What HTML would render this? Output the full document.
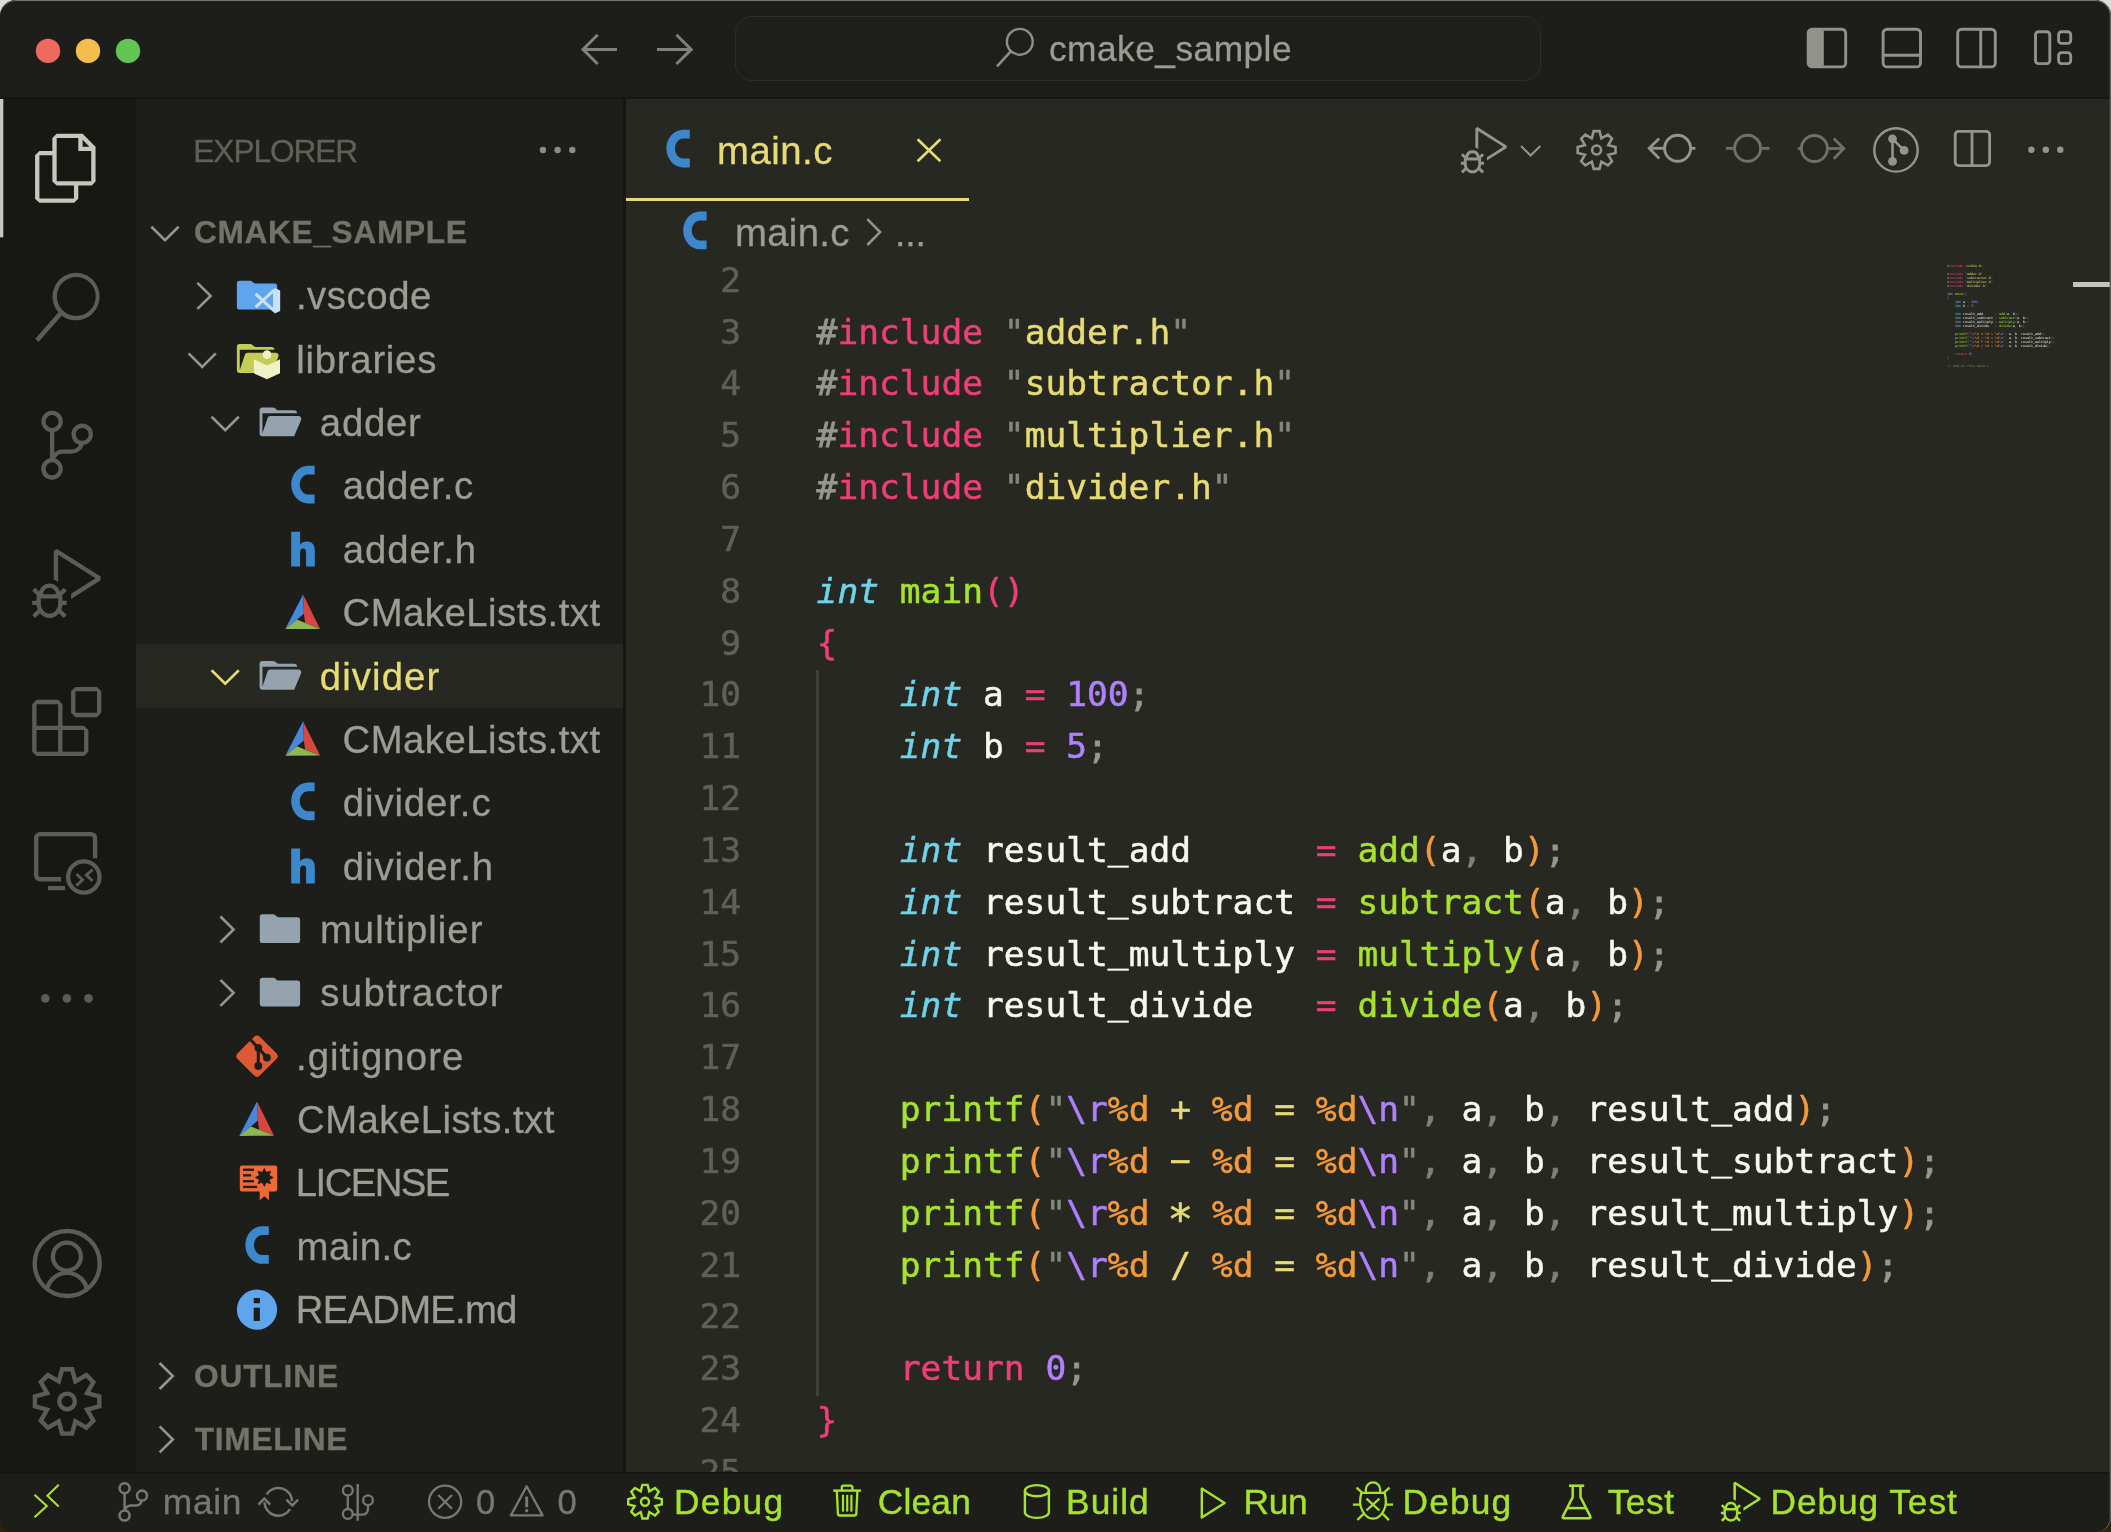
<!DOCTYPE html>
<html lang="en"><head><meta charset="utf-8"><title>main.c — cmake_sample</title>
<style>
*{box-sizing:border-box;margin:0;padding:0}
html,body{width:2111px;height:1532px;overflow:hidden}
body{background:linear-gradient(#dcdcda 0,#dcdcda 60px,#2a2410 60px,#2a2410 100%);font-family:"Liberation Sans",sans-serif;position:relative}
.win{position:absolute;left:0;top:0;width:2111px;height:1532px;border-radius:16px 16px 14px 14px;overflow:hidden;background:#1d1e1a}
.abs{position:absolute}
.tb{position:absolute;left:0;top:0;width:2111px;height:98px;background:#1d1e1a}
.tbline{position:absolute;left:0;top:97px;width:2111px;height:2px;background:#151612}
.act{position:absolute;left:0;top:99px;width:136px;height:1373px;background:#171813}
.side{position:absolute;left:136px;top:99px;width:487px;height:1373px;background:#1d1e1a}
.sash{position:absolute;left:623px;top:99px;width:3px;height:1373px;background:#161713}
.ed{position:absolute;left:626px;top:99px;width:1485px;height:1373px;background:#272822;overflow:hidden}
.sbline{position:absolute;left:0;top:1472px;width:2111px;height:2px;background:#151612}
.sb{position:absolute;left:0;top:1474px;width:2111px;height:58px;background:#1d1e1a}
.edge{position:absolute;left:0;top:0;width:2111px;height:1532px;border-radius:16px 16px 14px 14px;box-shadow:inset 0 1px 0 #747570, inset -1.3px 0 0 #5d5e59;pointer-events:none}
.t{position:absolute;white-space:pre;line-height:1}
/* code */
.ln{position:absolute;left:667px;width:74px;text-align:right;font:34.56px/51.84px "DejaVu Sans Mono","Liberation Mono",monospace;color:#5f6059;white-space:pre;-webkit-text-stroke:0.5px}
.cl{position:absolute;left:816.6px;font:34.56px/51.84px "DejaVu Sans Mono","Liberation Mono",monospace;color:#f8f8f2;white-space:pre;-webkit-text-stroke:0.5px}
.cl .p,.ml .p{color:#96978f}
.cl .q,.ml .q{color:#85867e}
.cl .c,.ml .c{color:#777870}
.cl .k,.ml .k{color:#ee3f77}
.cl .s,.ml .s{color:#e6db74}
.cl .t,.ml .t{color:#6fd3ea;font-style:italic}
.cl .f,.ml .f{color:#a6e22e}
.cl .v,.ml .v{color:#f8f8f2}
.cl .n,.ml .n{color:#ae81ff}
.cl .e,.ml .e{color:#ae81ff}
.cl .o,.ml .o{color:#f59a3a}
.cl .b1{color:#ee3f77}
.ml .b1{color:#8a8b84}
.cl .b2{color:#f59a3a}
.ml .b2{color:#8a8b84}
.ml .cm{color:#88846f}
.cl .t{position:static}
.guide{position:absolute;left:816.3px;top:670px;width:2.6px;height:726px;background:#40413b}
.mm{position:absolute;left:1947px;top:264px;width:140px;height:200px}
.ml{position:absolute;left:0;font:3.32px/4px "DejaVu Sans Mono","Liberation Mono",monospace;font-weight:bold;white-space:pre;color:#f8f8f2;opacity:.75}
.ml .t{position:static;font-style:normal}

.codelayer{will-change:transform;position:absolute;left:0;top:0;width:2111px;height:1532px;clip-path:inset(262px 0 60px 626px)}

.ui{position:absolute;left:0;top:0;width:2111px;height:1532px;will-change:transform}
.ui .t{-webkit-text-stroke:0.3px}
.selrow{position:absolute;left:136px;top:644.4px;width:487px;height:63.4px;background:#272822}
.tabline{position:absolute;left:626px;top:197.5px;width:343px;height:3px;background:#e6db74}
.cc{position:absolute;left:735px;top:16px;width:806px;height:65px;border:1.5px solid #2d2e2a;border-radius:17px;background:#1e1f1b}
.ico{position:absolute;left:0;top:0}
.cl .us{position:relative;top:-3.2px}
.cl .hy{display:inline-block;transform:translateY(-2px) scaleX(2)}
.cl .as{display:inline-block;transform:translateY(6.1px) scale(1.23)}
.cl .c{color:#7f8078}
.cl .c,.cl .p{-webkit-text-stroke:0.8px}

</style></head>
<body>
<div class="win">
  <div class="tb"></div>
  <div class="tbline"></div>
  <div class="act"></div>
  <div class="side"></div>
  <div class="sash"></div>
  <div class="ed"></div>
  <div class="codelayer">
    <div class="guide"></div>
<div class="ln" style="top:254.66px">2</div>
<div class="ln" style="top:306.50px">3</div>
<div class="cl" style="top:306.50px"><span class="p">#</span><span class="k">include</span> <span class="q">"</span><span class="s">adder.h</span><span class="q">"</span></div>
<div class="ln" style="top:358.34px">4</div>
<div class="cl" style="top:358.34px"><span class="p">#</span><span class="k">include</span> <span class="q">"</span><span class="s">subtractor.h</span><span class="q">"</span></div>
<div class="ln" style="top:410.18px">5</div>
<div class="cl" style="top:410.18px"><span class="p">#</span><span class="k">include</span> <span class="q">"</span><span class="s">multiplier.h</span><span class="q">"</span></div>
<div class="ln" style="top:462.02px">6</div>
<div class="cl" style="top:462.02px"><span class="p">#</span><span class="k">include</span> <span class="q">"</span><span class="s">divider.h</span><span class="q">"</span></div>
<div class="ln" style="top:513.86px">7</div>
<div class="ln" style="top:565.70px">8</div>
<div class="cl" style="top:565.70px"><span class="t">int</span> <span class="f">main</span><span class="b1">()</span></div>
<div class="ln" style="top:617.54px">9</div>
<div class="cl" style="top:617.54px"><span class="b1">{</span></div>
<div class="ln" style="top:669.38px">10</div>
<div class="cl" style="top:669.38px">    <span class="t">int</span> <span class="v">a</span> <span class="k">=</span> <span class="n">100</span><span class="p">;</span></div>
<div class="ln" style="top:721.22px">11</div>
<div class="cl" style="top:721.22px">    <span class="t">int</span> <span class="v">b</span> <span class="k">=</span> <span class="n">5</span><span class="p">;</span></div>
<div class="ln" style="top:773.06px">12</div>
<div class="ln" style="top:824.90px">13</div>
<div class="cl" style="top:824.90px">    <span class="t">int</span> <span class="v">result<span class="us">_</span>add</span>      <span class="k">=</span> <span class="f">add</span><span class="b2">(</span><span class="v">a</span><span class="c">,</span> <span class="v">b</span><span class="b2">)</span><span class="p">;</span></div>
<div class="ln" style="top:876.74px">14</div>
<div class="cl" style="top:876.74px">    <span class="t">int</span> <span class="v">result<span class="us">_</span>subtract</span> <span class="k">=</span> <span class="f">subtract</span><span class="b2">(</span><span class="v">a</span><span class="c">,</span> <span class="v">b</span><span class="b2">)</span><span class="p">;</span></div>
<div class="ln" style="top:928.58px">15</div>
<div class="cl" style="top:928.58px">    <span class="t">int</span> <span class="v">result<span class="us">_</span>multiply</span> <span class="k">=</span> <span class="f">multiply</span><span class="b2">(</span><span class="v">a</span><span class="c">,</span> <span class="v">b</span><span class="b2">)</span><span class="p">;</span></div>
<div class="ln" style="top:980.42px">16</div>
<div class="cl" style="top:980.42px">    <span class="t">int</span> <span class="v">result<span class="us">_</span>divide</span>   <span class="k">=</span> <span class="f">divide</span><span class="b2">(</span><span class="v">a</span><span class="c">,</span> <span class="v">b</span><span class="b2">)</span><span class="p">;</span></div>
<div class="ln" style="top:1032.26px">17</div>
<div class="ln" style="top:1084.10px">18</div>
<div class="cl" style="top:1084.10px">    <span class="f">printf</span><span class="b2">(</span><span class="q">"</span><span class="e">\r</span><span class="o">%d</span><span class="s"> + </span><span class="o">%d</span><span class="s"> = </span><span class="o">%d</span><span class="e">\n</span><span class="q">"</span><span class="c">,</span> <span class="v">a</span><span class="c">,</span> <span class="v">b</span><span class="c">,</span> <span class="v">result<span class="us">_</span>add</span><span class="b2">)</span><span class="p">;</span></div>
<div class="ln" style="top:1135.94px">19</div>
<div class="cl" style="top:1135.94px">    <span class="f">printf</span><span class="b2">(</span><span class="q">"</span><span class="e">\r</span><span class="o">%d</span><span class="s"> <span class="hy">-</span> </span><span class="o">%d</span><span class="s"> = </span><span class="o">%d</span><span class="e">\n</span><span class="q">"</span><span class="c">,</span> <span class="v">a</span><span class="c">,</span> <span class="v">b</span><span class="c">,</span> <span class="v">result<span class="us">_</span>subtract</span><span class="b2">)</span><span class="p">;</span></div>
<div class="ln" style="top:1187.78px">20</div>
<div class="cl" style="top:1187.78px">    <span class="f">printf</span><span class="b2">(</span><span class="q">"</span><span class="e">\r</span><span class="o">%d</span><span class="s"> <span class="as">*</span> </span><span class="o">%d</span><span class="s"> = </span><span class="o">%d</span><span class="e">\n</span><span class="q">"</span><span class="c">,</span> <span class="v">a</span><span class="c">,</span> <span class="v">b</span><span class="c">,</span> <span class="v">result<span class="us">_</span>multiply</span><span class="b2">)</span><span class="p">;</span></div>
<div class="ln" style="top:1239.62px">21</div>
<div class="cl" style="top:1239.62px">    <span class="f">printf</span><span class="b2">(</span><span class="q">"</span><span class="e">\r</span><span class="o">%d</span><span class="s"> / </span><span class="o">%d</span><span class="s"> = </span><span class="o">%d</span><span class="e">\n</span><span class="q">"</span><span class="c">,</span> <span class="v">a</span><span class="c">,</span> <span class="v">b</span><span class="c">,</span> <span class="v">result<span class="us">_</span>divide</span><span class="b2">)</span><span class="p">;</span></div>
<div class="ln" style="top:1291.46px">22</div>
<div class="ln" style="top:1343.30px">23</div>
<div class="cl" style="top:1343.30px">    <span class="k">return</span> <span class="n">0</span><span class="p">;</span></div>
<div class="ln" style="top:1395.14px">24</div>
<div class="cl" style="top:1395.14px"><span class="b1">}</span></div>
<div class="ln" style="top:1446.98px">25</div>
    <div class="mm">
<div class="ml" style="top:0.00px"><span class="p">#</span><span class="k">include</span> <span class="q">&lt;</span><span class="s">stdio.h</span><span class="q">&gt;</span></div>
<div class="ml" style="top:8.00px"><span class="p">#</span><span class="k">include</span> <span class="q">"</span><span class="s">adder.h</span><span class="q">"</span></div>
<div class="ml" style="top:12.00px"><span class="p">#</span><span class="k">include</span> <span class="q">"</span><span class="s">subtractor.h</span><span class="q">"</span></div>
<div class="ml" style="top:16.00px"><span class="p">#</span><span class="k">include</span> <span class="q">"</span><span class="s">multiplier.h</span><span class="q">"</span></div>
<div class="ml" style="top:20.00px"><span class="p">#</span><span class="k">include</span> <span class="q">"</span><span class="s">divider.h</span><span class="q">"</span></div>
<div class="ml" style="top:28.00px"><span class="t">int</span> <span class="f">main</span><span class="b1">()</span></div>
<div class="ml" style="top:32.00px"><span class="b1">{</span></div>
<div class="ml" style="top:36.00px">    <span class="t">int</span> <span class="v">a</span> <span class="k">=</span> <span class="n">100</span><span class="p">;</span></div>
<div class="ml" style="top:40.00px">    <span class="t">int</span> <span class="v">b</span> <span class="k">=</span> <span class="n">5</span><span class="p">;</span></div>
<div class="ml" style="top:48.00px">    <span class="t">int</span> <span class="v">result<span class="us">_</span>add</span>      <span class="k">=</span> <span class="f">add</span><span class="b2">(</span><span class="v">a</span><span class="c">,</span> <span class="v">b</span><span class="b2">)</span><span class="p">;</span></div>
<div class="ml" style="top:52.00px">    <span class="t">int</span> <span class="v">result<span class="us">_</span>subtract</span> <span class="k">=</span> <span class="f">subtract</span><span class="b2">(</span><span class="v">a</span><span class="c">,</span> <span class="v">b</span><span class="b2">)</span><span class="p">;</span></div>
<div class="ml" style="top:56.00px">    <span class="t">int</span> <span class="v">result<span class="us">_</span>multiply</span> <span class="k">=</span> <span class="f">multiply</span><span class="b2">(</span><span class="v">a</span><span class="c">,</span> <span class="v">b</span><span class="b2">)</span><span class="p">;</span></div>
<div class="ml" style="top:60.00px">    <span class="t">int</span> <span class="v">result<span class="us">_</span>divide</span>   <span class="k">=</span> <span class="f">divide</span><span class="b2">(</span><span class="v">a</span><span class="c">,</span> <span class="v">b</span><span class="b2">)</span><span class="p">;</span></div>
<div class="ml" style="top:68.00px">    <span class="f">printf</span><span class="b2">(</span><span class="q">"</span><span class="e">\r</span><span class="o">%d</span><span class="s"> + </span><span class="o">%d</span><span class="s"> = </span><span class="o">%d</span><span class="e">\n</span><span class="q">"</span><span class="c">,</span> <span class="v">a</span><span class="c">,</span> <span class="v">b</span><span class="c">,</span> <span class="v">result<span class="us">_</span>add</span><span class="b2">)</span><span class="p">;</span></div>
<div class="ml" style="top:72.00px">    <span class="f">printf</span><span class="b2">(</span><span class="q">"</span><span class="e">\r</span><span class="o">%d</span><span class="s"> <span class="hy">-</span> </span><span class="o">%d</span><span class="s"> = </span><span class="o">%d</span><span class="e">\n</span><span class="q">"</span><span class="c">,</span> <span class="v">a</span><span class="c">,</span> <span class="v">b</span><span class="c">,</span> <span class="v">result<span class="us">_</span>subtract</span><span class="b2">)</span><span class="p">;</span></div>
<div class="ml" style="top:76.00px">    <span class="f">printf</span><span class="b2">(</span><span class="q">"</span><span class="e">\r</span><span class="o">%d</span><span class="s"> <span class="as">*</span> </span><span class="o">%d</span><span class="s"> = </span><span class="o">%d</span><span class="e">\n</span><span class="q">"</span><span class="c">,</span> <span class="v">a</span><span class="c">,</span> <span class="v">b</span><span class="c">,</span> <span class="v">result<span class="us">_</span>multiply</span><span class="b2">)</span><span class="p">;</span></div>
<div class="ml" style="top:80.00px">    <span class="f">printf</span><span class="b2">(</span><span class="q">"</span><span class="e">\r</span><span class="o">%d</span><span class="s"> / </span><span class="o">%d</span><span class="s"> = </span><span class="o">%d</span><span class="e">\n</span><span class="q">"</span><span class="c">,</span> <span class="v">a</span><span class="c">,</span> <span class="v">b</span><span class="c">,</span> <span class="v">result<span class="us">_</span>divide</span><span class="b2">)</span><span class="p">;</span></div>
<div class="ml" style="top:88.00px">    <span class="k">return</span> <span class="n">0</span><span class="p">;</span></div>
<div class="ml" style="top:92.00px"><span class="b1">}</span></div>
<div class="ml" style="top:100.00px"><span class="cm">// end of file main.c</span></div>
    </div>
  </div>
  <div class="sbline"></div>
  <div class="sb"></div>
  <div class="selrow"></div>
  <div class="tabline"></div>
  <div class="cc"></div>
  <div class="ui">
<svg class="ico" width="2111" height="1532" viewBox="0 0 2111 1532"><circle cx="48.00" cy="50.90" r="12.20" fill="#ed6a5e"/>
<circle cx="88.00" cy="50.90" r="12.20" fill="#f4be4f"/>
<circle cx="128.00" cy="50.90" r="12.20" fill="#61c554"/>
<path d="M617.00 49.40 L583.60 49.40" fill="none" stroke="#80817a" stroke-width="3.00" stroke-linecap="butt" stroke-linejoin="miter" />
<path d="M597.70 34.80 L583.00 49.40 L597.70 64.00" fill="none" stroke="#80817a" stroke-width="3.00" stroke-linecap="butt" stroke-linejoin="miter" />
<path d="M657.00 49.40 L690.60 49.40" fill="none" stroke="#80817a" stroke-width="3.00" stroke-linecap="butt" stroke-linejoin="miter" />
<path d="M676.40 34.80 L691.20 49.40 L676.40 64.00" fill="none" stroke="#80817a" stroke-width="3.00" stroke-linecap="butt" stroke-linejoin="miter" />
<circle cx="1019.80" cy="41.80" r="12.90" fill="none" stroke="#8d8e86" stroke-width="2.40"/>
<path d="M1011.00 51.20 L997.00 66.30" fill="none" stroke="#8d8e86" stroke-width="2.60" stroke-linecap="butt" stroke-linejoin="miter" />
<rect x="1808.20" y="29.20" width="37.50" height="37.70" rx="4.00" fill="none" stroke="#91928a" stroke-width="2.90"/>
<path d="M1808.2 33.2a4 4 0 0 1 4-4h11.6v37.7h-11.6a4 4 0 0 1-4-4z" fill="#91928a"/>
<rect x="1883.10" y="29.20" width="37.40" height="37.70" rx="4.00" fill="none" stroke="#91928a" stroke-width="2.90"/>
<path d="M1883.10 55.20 L1920.50 55.20" fill="none" stroke="#91928a" stroke-width="2.90" stroke-linecap="butt" stroke-linejoin="miter" />
<rect x="1957.70" y="29.20" width="37.60" height="37.70" rx="4.00" fill="none" stroke="#91928a" stroke-width="2.90"/>
<path d="M1980.70 29.20 L1980.70 66.90" fill="none" stroke="#91928a" stroke-width="2.90" stroke-linecap="butt" stroke-linejoin="miter" />
<rect x="2035.50" y="31.70" width="14.30" height="31.90" rx="3.00" fill="none" stroke="#91928a" stroke-width="2.90"/>
<rect x="2058.60" y="31.70" width="12.10" height="11.70" rx="3.00" fill="none" stroke="#91928a" stroke-width="2.90"/>
<rect x="2058.60" y="52.60" width="12.10" height="11.00" rx="3.00" fill="none" stroke="#91928a" stroke-width="2.90"/>
<rect x="0" y="99" width="3.3" height="138.3" fill="#c6c7bd"/>
<g transform="translate(32.20 133.70) scale(2.8800)" fill="#c6c7bd"><path d="M17.5 0h-9L7 1.5V6H2.5L1 7.5v15.07L2.5 24h12.07L16 22.57V18h4.7l1.3-1.43V4.5L17.5 0zm0 2.12l2.38 2.38H17.5V2.12zm-3 20.38h-12v-15H7v9.07L8.5 18h6v4.5zm6-6h-12v-15H16V6h4.5v10.5z"/></g>
<g transform="translate(32.40 272.80) scale(2.8800)" fill="#5b5c55"><path d="M15.25 0a8.25 8.25 0 0 0-6.18 13.72L1 22.88l1.12 1.12 8.05-9.12A8.251 8.251 0 1 0 15.25.01V0zm0 15a6.75 6.75 0 1 1 0-13.5 6.75 6.75 0 0 1 0 13.5z"/></g>
<g transform="translate(32.50 410.70) scale(2.8800)" fill="#5b5c55"><path d="M21.007 8.222A3.738 3.738 0 0 0 15.045 5.2a3.737 3.737 0 0 0 1.156 6.583 2.988 2.988 0 0 1-2.668 1.67h-2.99a4.456 4.456 0 0 0-2.989 1.165V7.4a3.737 3.737 0 1 0-1.494 0v9.117a3.776 3.776 0 1 0 1.816.099 2.99 2.99 0 0 1 2.668-1.667h2.99a4.484 4.484 0 0 0 4.223-3.039 3.736 3.736 0 0 0 3.25-3.687zM4.565 3.738a2.242 2.242 0 1 1 4.484 0 2.242 2.242 0 0 1-4.484 0zm4.484 16.441a2.242 2.242 0 1 1-4.484 0 2.242 2.242 0 0 1 4.484 0zm8.221-9.715a2.242 2.242 0 1 1 0-4.485 2.242 2.242 0 0 1 0 4.485z"/></g>
<g transform="translate(32.20 548.90) scale(2.8800)" fill="#5b5c55"><path d="M10.94 13.5l-1.32 1.32a3.73 3.73 0 0 0-7.24 0L1.06 13.5 0 14.56l1.72 1.72-.22.22V18H0v1.5h1.5v.08c.077.489.214.966.41 1.42L0 22.94 1.06 24l1.65-1.65A4.308 4.308 0 0 0 6 24a4.31 4.31 0 0 0 3.29-1.65L10.94 24 12 22.94 10.09 21c.198-.464.336-.951.41-1.45v-.1H12V18h-1.5v-1.5l-.22-.22L12 14.56l-1.06-1.06zM6 13.5a2.25 2.25 0 0 1 2.25 2.25h-4.5A2.25 2.25 0 0 1 6 13.5zm3 6a3.33 3.33 0 0 1-3 3 3.33 3.33 0 0 1-3-3v-2.25h6v2.25zm14.76-9.9v1.26L13.5 17.37V15.6l8.5-5.37L9 2v9.46a5.07 5.07 0 0 0-1.5-.72V.63L8.64 0l15.12 9.6z"/></g>
<g transform="translate(32.20 686.90) scale(2.8800)" fill="#5b5c55"><path d="M13.5 1.5L15 0h7.5L24 1.5V9l-1.5 1.5H15L13.5 9V1.5zm1.5 0V9h7.5V1.5H15zM0 15V6l1.5-1.5H9L10.5 6v7.5H18l1.5 1.5v7.5L18 24H1.5L0 22.5V15zm9-1.5V6H1.5v7.5H9zM9 15H1.5v7.5H9V15zm1.5 7.5H18V15h-7.5v7.5z"/></g>
<path d="M95.1 858.3V838.1a4 4 0 0 0-4-4H40.2a4 4 0 0 0-4 4v37.2a4 4 0 0 0 4 4H61.1" fill="none" stroke="#5b5c55" stroke-width="4.4"/>
<path d="M47.90 888.10 L65.00 888.10" fill="none" stroke="#5b5c55" stroke-width="4.30" stroke-linecap="butt" stroke-linejoin="miter" />
<circle cx="83.80" cy="877.00" r="15.70" fill="none" stroke="#5b5c55" stroke-width="4.30"/>
<path d="M76.40 874.20 L82.60 879.70 L76.40 885.60" fill="none" stroke="#5b5c55" stroke-width="2.90" stroke-linecap="butt" stroke-linejoin="miter" />
<path d="M92.60 869.50 L86.30 875.20 L92.60 880.80" fill="none" stroke="#5b5c55" stroke-width="2.90" stroke-linecap="butt" stroke-linejoin="miter" />
<circle cx="45.30" cy="998.40" r="4.30" fill="#5b5c55"/>
<circle cx="66.90" cy="998.40" r="4.30" fill="#5b5c55"/>
<circle cx="88.50" cy="998.40" r="4.30" fill="#5b5c55"/>
<clipPath id="acc"><circle cx="67.2" cy="1263.5" r="32.5"/></clipPath>
<circle cx="67.20" cy="1263.50" r="32.50" fill="none" stroke="#5b5c55" stroke-width="4.30"/>
<circle cx="66.90" cy="1256.60" r="14.00" fill="none" stroke="#5b5c55" stroke-width="4.30"/>
<circle cx="67" cy="1293.3" r="20.4" fill="none" stroke="#5b5c55" stroke-width="4.3" clip-path="url(#acc)"/>
<path d="M58.83 1381.44 L62.10 1369.20 L72.10 1369.20 L75.37 1381.44 L86.33 1375.10 L93.40 1382.17 L87.06 1393.13 L99.30 1396.40 L99.30 1406.40 L87.06 1409.67 L93.40 1420.63 L86.33 1427.70 L75.37 1421.36 L72.10 1433.60 L62.10 1433.60 L58.83 1421.36 L47.87 1427.70 L40.80 1420.63 L47.14 1409.67 L34.90 1406.40 L34.90 1396.40 L47.14 1393.13 L40.80 1382.17 L47.87 1375.10Z" fill="none" stroke="#5b5c55" stroke-width="4.40" stroke-linejoin="miter"/>
<circle cx="67.10" cy="1401.40" r="7.80" fill="none" stroke="#5b5c55" stroke-width="4.40"/>
<path d="M151.40 226.70 L165.00 240.10 L178.60 226.70" fill="none" stroke="#94958d" stroke-width="2.60" stroke-linecap="butt" stroke-linejoin="miter" />
<path d="M159.60 1363.00 L172.80 1376.00 L159.60 1389.00" fill="none" stroke="#94958d" stroke-width="2.60" stroke-linecap="butt" stroke-linejoin="miter" />
<path d="M159.60 1426.40 L172.80 1439.40 L159.60 1452.40" fill="none" stroke="#94958d" stroke-width="2.60" stroke-linecap="butt" stroke-linejoin="miter" />
<circle cx="542.90" cy="150.00" r="3.20" fill="#8b8c84"/>
<circle cx="557.60" cy="150.00" r="3.20" fill="#8b8c84"/>
<circle cx="572.30" cy="150.00" r="3.20" fill="#8b8c84"/>
<path d="M197.40 282.88 L210.60 295.88 L197.40 308.88" fill="none" stroke="#94958d" stroke-width="2.60" stroke-linecap="butt" stroke-linejoin="miter" />
<path d="M188.60 353.44 L202.20 366.84 L215.80 353.44" fill="none" stroke="#94958d" stroke-width="2.60" stroke-linecap="butt" stroke-linejoin="miter" />
<path d="M211.60 416.80 L225.20 430.20 L238.80 416.80" fill="none" stroke="#94958d" stroke-width="2.60" stroke-linecap="butt" stroke-linejoin="miter" />
<path d="M211.60 670.24 L225.20 683.64 L238.80 670.24" fill="none" stroke="#e6db74" stroke-width="2.60" stroke-linecap="butt" stroke-linejoin="miter" />
<path d="M220.40 916.48 L233.60 929.48 L220.40 942.48" fill="none" stroke="#94958d" stroke-width="2.60" stroke-linecap="butt" stroke-linejoin="miter" />
<path d="M220.40 979.84 L233.60 992.84 L220.40 1005.84" fill="none" stroke="#94958d" stroke-width="2.60" stroke-linecap="butt" stroke-linejoin="miter" />
<g transform="translate(234.00 272.08) scale(1.4400)" fill="#5ea5ee"><path d="M13.84376,7.53645l-1.28749-1.0729A2,2,0,0,0,11.27591,6H4A2,2,0,0,0,2,8V24a2,2,0,0,0,2,2H28a2,2,0,0,0,2-2V10a2,2,0,0,0-2-2H15.12412A2,2,0,0,1,13.84376,7.53645Z"/></g>
<path d="M255.61 293.97 L274.09 310.91" fill="none" stroke="#c9e1f9" stroke-width="3.00" stroke-linecap="butt" stroke-linejoin="miter" />
<path d="M255.61 307.22 L274.09 290.16" fill="none" stroke="#c9e1f9" stroke-width="3.00" stroke-linecap="butt" stroke-linejoin="miter" />
<path d="M273.01 290.56 L274.66 287.89 L280.17 290.45 L280.17 310.91 L274.66 313.47 L273.01 310.80 Z" fill="#c9e1f9"/>
<g transform="translate(234.00 335.44) scale(1.4400)" fill="#c4cc53"><path d="M28.96692,12H9.44152a2,2,0,0,0-1.89737,1.36754L4,24V10H28a2,2,0,0,0-2-2H15.1241a2,2,0,0,1-1.28038-.46357L12.5563,6.46357A2,2,0,0,0,11.27592,6H4A2,2,0,0,0,2,8V24a2,2,0,0,0,2,2H26l4.80523-11.21213A2,2,0,0,0,28.96692,12Z"/></g>
<circle cx="267.00" cy="354.64" r="4.30" fill="#eef2c6"/>
<path d="M253.9 359.14 L267 365.44 L280 359.14 V373.34 L267 379.34 L253.9 373.34 Z" fill="#eef2c6"/>
<g transform="translate(256.70 398.80) scale(1.4400)" fill="#94a3ae"><path d="M28.96692,12H9.44152a2,2,0,0,0-1.89737,1.36754L4,24V10H28a2,2,0,0,0-2-2H15.1241a2,2,0,0,1-1.28038-.46357L12.5563,6.46357A2,2,0,0,0,11.27592,6H4A2,2,0,0,0,2,8V24a2,2,0,0,0,2,2H26l4.80523-11.21213A2,2,0,0,0,28.96692,12Z"/></g>
<g transform="translate(256.70 652.24) scale(1.4400)" fill="#94a3ae"><path d="M28.96692,12H9.44152a2,2,0,0,0-1.89737,1.36754L4,24V10H28a2,2,0,0,0-2-2H15.1241a2,2,0,0,1-1.28038-.46357L12.5563,6.46357A2,2,0,0,0,11.27592,6H4A2,2,0,0,0,2,8V24a2,2,0,0,0,2,2H26l4.80523-11.21213A2,2,0,0,0,28.96692,12Z"/></g>
<g transform="translate(256.90 905.68) scale(1.4400)" fill="#94a3ae"><path d="M13.84376,7.53645l-1.28749-1.0729A2,2,0,0,0,11.27591,6H4A2,2,0,0,0,2,8V24a2,2,0,0,0,2,2H28a2,2,0,0,0,2-2V10a2,2,0,0,0-2-2H15.12412A2,2,0,0,1,13.84376,7.53645Z"/></g>
<g transform="translate(256.90 969.04) scale(1.4400)" fill="#94a3ae"><path d="M13.84376,7.53645l-1.28749-1.0729A2,2,0,0,0,11.27591,6H4A2,2,0,0,0,2,8V24a2,2,0,0,0,2,2H28a2,2,0,0,0,2-2V10a2,2,0,0,0-2-2H15.12412A2,2,0,0,1,13.84376,7.53645Z"/></g>
<path d="M314.60 465.71 H308.00 C298.72 465.71 291.20 474.15 291.20 484.56 C291.20 494.97 298.72 503.41 308.00 503.41 H314.60 V494.56 H308.00 C303.47 494.56 299.80 490.08 299.80 484.56 C299.80 479.04 303.47 474.56 308.00 474.56 H314.60 Z" fill="#3d87cc"/>
<path d="M314.60 782.51 H308.00 C298.72 782.51 291.20 790.95 291.20 801.36 C291.20 811.77 298.72 820.21 308.00 820.21 H314.60 V811.36 H308.00 C303.47 811.36 299.80 806.88 299.80 801.36 C299.80 795.84 303.47 791.36 308.00 791.36 H314.60 Z" fill="#3d87cc"/>
<path d="M291.20 531.72 h8.9 v13 c1.6 -2.2 3.9 -3.3 6.6 -3.3 c5.2 0 8.1 3.2 8.1 8.7 v16.5 h-8.7 v-14.6 c0 -2.2 -1 -3.4 -2.9 -3.4 c-2 0 -3.1 1.3 -3.1 3.6 v14.4 h-8.9 Z" fill="#3d87cc"/>
<path d="M291.20 848.52 h8.9 v13 c1.6 -2.2 3.9 -3.3 6.6 -3.3 c5.2 0 8.1 3.2 8.1 8.7 v16.5 h-8.7 v-14.6 c0 -2.2 -1 -3.4 -2.9 -3.4 c-2 0 -3.1 1.3 -3.1 3.6 v14.4 h-8.9 Z" fill="#3d87cc"/>
<path d="M303.10 594.58 L285.30 629.08 L297.00 619.58 L303.90 613.68 Z" fill="#4688dc"/>
<path d="M303.10 594.58 L303.90 613.68 L305.20 622.98 L320.10 628.88 Z" fill="#d8473f"/>
<path d="M285.30 629.08 L297.00 619.58 L305.20 622.98 L320.10 628.88 Z" fill="#8db755"/>
<path d="M303.10 721.30 L285.30 755.80 L297.00 746.30 L303.90 740.40 Z" fill="#4688dc"/>
<path d="M303.10 721.30 L303.90 740.40 L305.20 749.70 L320.10 755.60 Z" fill="#d8473f"/>
<path d="M285.30 755.80 L297.00 746.30 L305.20 749.70 L320.10 755.60 Z" fill="#8db755"/>
<path d="M257.00 1101.46 L239.20 1135.96 L250.90 1126.46 L257.80 1120.56 Z" fill="#4688dc"/>
<path d="M257.00 1101.46 L257.80 1120.56 L259.10 1129.86 L274.00 1135.76 Z" fill="#d8473f"/>
<path d="M239.20 1135.96 L250.90 1126.46 L259.10 1129.86 L274.00 1135.76 Z" fill="#8db755"/>
<path d="M268.80 1226.13 H262.20 C252.92 1226.13 245.40 1234.57 245.40 1244.98 C245.40 1255.39 252.92 1263.83 262.20 1263.83 H268.80 V1254.98 H262.20 C257.67 1254.98 254.00 1250.50 254.00 1244.98 C254.00 1239.46 257.67 1234.98 262.20 1234.98 H268.80 Z" fill="#3d87cc"/>
<rect x="241.30" y="1040.50" width="31.4" height="31.4" rx="4" fill="#dd5934" transform="rotate(45 257 1056.20)"/>
<path d="M250.60 1039.80 L258.30 1047.90 L258.30 1065.90" fill="none" stroke="#1d1e1a" stroke-width="3.10" stroke-linecap="butt" stroke-linejoin="miter" />
<path d="M258.30 1047.90 L266.90 1057.60" fill="none" stroke="#1d1e1a" stroke-width="3.10" stroke-linecap="butt" stroke-linejoin="miter" />
<circle cx="258.30" cy="1047.90" r="3.80" fill="#1d1e1a"/>
<circle cx="266.90" cy="1057.60" r="3.90" fill="#1d1e1a"/>
<circle cx="258.30" cy="1065.90" r="3.90" fill="#1d1e1a"/>
<path d="M242 1165.44 H275 a2.2 2.2 0 0 1 2.2 2.2 V1189.34 a2.2 2.2 0 0 1 -2.2 2.2 H269 V1200.14 L264.35 1196.24 L259.7 1200.14 V1191.54 H242 a2.2 2.2 0 0 1 -2.2 -2.2 V1167.64 a2.2 2.2 0 0 1 2.2 -2.2 Z" fill="#ee6938"/>
<path d="M243.00 1169.74 L254.00 1169.74" fill="none" stroke="#1d1e1a" stroke-width="2.30" stroke-linecap="butt" stroke-linejoin="miter" />
<path d="M243.00 1175.34 L251.20 1175.34" fill="none" stroke="#1d1e1a" stroke-width="2.30" stroke-linecap="butt" stroke-linejoin="miter" />
<path d="M243.00 1181.24 L254.00 1181.24" fill="none" stroke="#1d1e1a" stroke-width="2.30" stroke-linecap="butt" stroke-linejoin="miter" />
<path d="M243.00 1186.94 L257.20 1186.94" fill="none" stroke="#1d1e1a" stroke-width="2.30" stroke-linecap="butt" stroke-linejoin="miter" />
<path d="M264.30 1167.84 L266.52 1172.08 L271.09 1170.65 L269.66 1175.22 L273.90 1177.44 L269.66 1179.66 L271.09 1184.23 L266.52 1182.80 L264.30 1187.04 L262.08 1182.80 L257.51 1184.23 L258.94 1179.66 L254.70 1177.44 L258.94 1175.22 L257.51 1170.65 L262.08 1172.08 Z" fill="#1d1e1a"/>
<circle cx="257.00" cy="1309.64" r="20.10" fill="#5ea5ee"/>
<rect x="253.70" y="1298.04" width="6.20" height="5.20" rx="0.00" fill="#1d1e1a"/>
<rect x="253.70" y="1307.74" width="6.20" height="13.20" rx="0.00" fill="#1d1e1a"/>
<path d="M689.80 129.70 H683.20 C673.92 129.70 666.40 138.14 666.40 148.55 C666.40 158.96 673.92 167.40 683.20 167.40 H689.80 V158.55 H683.20 C678.67 158.55 675.00 154.07 675.00 148.55 C675.00 143.03 678.67 138.55 683.20 138.55 H689.80 Z" fill="#3d87cc"/>
<path d="M917.60 139.30 L940.40 161.20" fill="none" stroke="#e6db74" stroke-width="2.60" stroke-linecap="butt" stroke-linejoin="miter" />
<path d="M940.40 139.30 L917.60 161.20" fill="none" stroke="#e6db74" stroke-width="2.60" stroke-linecap="butt" stroke-linejoin="miter" />
<path d="M706.60 211.60 H700.00 C690.72 211.60 683.20 220.04 683.20 230.45 C683.20 240.86 690.72 249.30 700.00 249.30 H706.60 V240.45 H700.00 C695.47 240.45 691.80 235.97 691.80 230.45 C691.80 224.93 695.47 220.45 700.00 220.45 H706.60 Z" fill="#3d87cc"/>
<path d="M867.30 219.20 L880.10 232.10 L867.30 245.00" fill="none" stroke="#94958d" stroke-width="2.50" stroke-linecap="butt" stroke-linejoin="miter" />
<g transform="translate(1460.90 127.10) scale(1.9300)" fill="#94958d"><path d="M10.94 13.5l-1.32 1.32a3.73 3.73 0 0 0-7.24 0L1.06 13.5 0 14.56l1.72 1.72-.22.22V18H0v1.5h1.5v.08c.077.489.214.966.41 1.42L0 22.94 1.06 24l1.65-1.65A4.308 4.308 0 0 0 6 24a4.31 4.31 0 0 0 3.29-1.65L10.94 24 12 22.94 10.09 21c.198-.464.336-.951.41-1.45v-.1H12V18h-1.5v-1.5l-.22-.22L12 14.56l-1.06-1.06zM6 13.5a2.25 2.25 0 0 1 2.25 2.25h-4.5A2.25 2.25 0 0 1 6 13.5zm3 6a3.33 3.33 0 0 1-3 3 3.33 3.33 0 0 1-3-3v-2.25h6v2.25zm14.76-9.9v1.26L13.5 17.37V15.6l8.5-5.37L9 2v9.46a5.07 5.07 0 0 0-1.5-.72V.63L8.64 0l15.12 9.6z"/></g>
<path d="M1521.00 146.00 L1530.60 155.60 L1540.30 146.00" fill="none" stroke="#94958d" stroke-width="2.10" stroke-linecap="butt" stroke-linejoin="miter" />
<path d="M1591.78 138.36 L1593.70 131.10 L1599.50 131.10 L1601.42 138.36 L1607.91 134.59 L1612.01 138.69 L1608.24 145.18 L1615.50 147.10 L1615.50 152.90 L1608.24 154.82 L1612.01 161.31 L1607.91 165.41 L1601.42 161.64 L1599.50 168.90 L1593.70 168.90 L1591.78 161.64 L1585.29 165.41 L1581.19 161.31 L1584.96 154.82 L1577.70 152.90 L1577.70 147.10 L1584.96 145.18 L1581.19 138.69 L1585.29 134.59Z" fill="none" stroke="#94958d" stroke-width="2.60" stroke-linejoin="miter"/>
<circle cx="1596.60" cy="150.00" r="4.50" fill="none" stroke="#94958d" stroke-width="2.60"/>
<circle cx="1677.60" cy="148.30" r="13.00" fill="none" stroke="#94958d" stroke-width="2.90"/>
<path d="M1650.00 148.30 L1664.60 148.30" fill="none" stroke="#94958d" stroke-width="2.80" stroke-linecap="butt" stroke-linejoin="miter" />
<path d="M1659.20 138.40 L1649.20 148.30 L1659.20 158.50" fill="none" stroke="#94958d" stroke-width="2.80" stroke-linecap="butt" stroke-linejoin="miter" />
<path d="M1690.60 148.30 L1695.40 148.30" fill="none" stroke="#94958d" stroke-width="2.80" stroke-linecap="butt" stroke-linejoin="miter" />
<circle cx="1747.60" cy="148.30" r="13.00" fill="none" stroke="#6f7069" stroke-width="2.90"/>
<path d="M1725.90 148.30 L1734.60 148.30" fill="none" stroke="#6f7069" stroke-width="2.80" stroke-linecap="butt" stroke-linejoin="miter" />
<path d="M1760.60 148.30 L1769.40 148.30" fill="none" stroke="#6f7069" stroke-width="2.80" stroke-linecap="butt" stroke-linejoin="miter" />
<circle cx="1814.40" cy="148.50" r="13.00" fill="none" stroke="#6f7069" stroke-width="2.90"/>
<path d="M1797.80 148.50 L1801.40 148.50" fill="none" stroke="#6f7069" stroke-width="2.80" stroke-linecap="butt" stroke-linejoin="miter" />
<path d="M1827.40 148.50 L1843.00 148.50" fill="none" stroke="#6f7069" stroke-width="2.80" stroke-linecap="butt" stroke-linejoin="miter" />
<path d="M1833.80 138.60 L1843.80 148.50 L1833.80 158.70" fill="none" stroke="#6f7069" stroke-width="2.80" stroke-linecap="butt" stroke-linejoin="miter" />
<circle cx="1896.00" cy="149.90" r="21.70" fill="none" stroke="#94958d" stroke-width="2.40"/>
<path d="M1892.50 138.80 L1892.50 161.40" fill="none" stroke="#94958d" stroke-width="2.60" stroke-linecap="butt" stroke-linejoin="miter" />
<path d="M1892.50 138.80 L1904.10 150.40" fill="none" stroke="#94958d" stroke-width="2.60" stroke-linecap="butt" stroke-linejoin="miter" />
<circle cx="1892.50" cy="138.80" r="4.40" fill="#94958d"/>
<circle cx="1904.10" cy="150.40" r="4.40" fill="#94958d"/>
<circle cx="1892.50" cy="161.40" r="4.40" fill="#94958d"/>
<rect x="1955.20" y="131.30" width="34.40" height="34.30" rx="3.50" fill="none" stroke="#94958d" stroke-width="2.80"/>
<path d="M1972.00 131.30 L1972.00 165.60" fill="none" stroke="#94958d" stroke-width="2.80" stroke-linecap="butt" stroke-linejoin="miter" />
<circle cx="2031.40" cy="149.80" r="3.20" fill="#94958d"/>
<circle cx="2045.80" cy="149.80" r="3.20" fill="#94958d"/>
<circle cx="2060.30" cy="149.80" r="3.20" fill="#94958d"/>
<rect x="2073.00" y="282.00" width="38.00" height="5.00" rx="0.00" fill="#c3c4ba"/>
<path d="M34.50 1494.70 L46.80 1505.90 L34.50 1517.20" fill="none" stroke="#a6e22e" stroke-width="2.10" stroke-linecap="butt" stroke-linejoin="miter" />
<path d="M58.70 1484.70 L47.40 1495.70 L58.70 1506.60" fill="none" stroke="#a6e22e" stroke-width="2.10" stroke-linecap="butt" stroke-linejoin="miter" />
<g transform="translate(113.30 1482.00) scale(1.6600)" fill="#777870"><path d="M21.007 8.222A3.738 3.738 0 0 0 15.045 5.2a3.737 3.737 0 0 0 1.156 6.583 2.988 2.988 0 0 1-2.668 1.67h-2.99a4.456 4.456 0 0 0-2.989 1.165V7.4a3.737 3.737 0 1 0-1.494 0v9.117a3.776 3.776 0 1 0 1.816.099 2.99 2.99 0 0 1 2.668-1.667h2.99a4.484 4.484 0 0 0 4.223-3.039 3.736 3.736 0 0 0 3.25-3.687zM4.565 3.738a2.242 2.242 0 1 1 4.484 0 2.242 2.242 0 0 1-4.484 0zm4.484 16.441a2.242 2.242 0 1 1-4.484 0 2.242 2.242 0 0 1 4.484 0zm8.221-9.715a2.242 2.242 0 1 1 0-4.485 2.242 2.242 0 0 1 0 4.485z"/></g>
<path d="M266.51 1494.43 A13.90 13.90 0 0 1 292.19 1501.31" fill="none" stroke="#777870" stroke-width="2.5"/>
<path d="M286.40 1499.70 L292.30 1505.40 L298.20 1499.70" fill="none" stroke="#777870" stroke-width="2.50" stroke-linecap="butt" stroke-linejoin="miter" />
<path d="M290.09 1509.17 A13.90 13.90 0 0 1 264.41 1502.29" fill="none" stroke="#777870" stroke-width="2.5"/>
<path d="M258.40 1504.60 L264.30 1498.50 L270.20 1504.60" fill="none" stroke="#777870" stroke-width="2.50" stroke-linecap="butt" stroke-linejoin="miter" />
<circle cx="347.80" cy="1490.40" r="4.90" fill="none" stroke="#777870" stroke-width="2.30"/>
<circle cx="347.80" cy="1513.90" r="4.90" fill="none" stroke="#777870" stroke-width="2.30"/>
<path d="M347.80 1495.30 L347.80 1509.00" fill="none" stroke="#777870" stroke-width="2.30" stroke-linecap="butt" stroke-linejoin="miter" />
<path d="M357.70 1484.00 L357.70 1520.70" fill="none" stroke="#777870" stroke-width="2.40" stroke-linecap="butt" stroke-linejoin="miter" />
<circle cx="368.00" cy="1500.30" r="4.90" fill="none" stroke="#777870" stroke-width="2.30"/>
<path d="M368 1505.2 v3 c0 4 -2.5 6.5 -6.5 6.5 h-8.8" fill="none" stroke="#777870" stroke-width="2.3"/>
<circle cx="445.10" cy="1501.80" r="16.10" fill="none" stroke="#777870" stroke-width="2.30"/>
<path d="M438.20 1495.00 L452.00 1508.80" fill="none" stroke="#777870" stroke-width="2.20" stroke-linecap="butt" stroke-linejoin="miter" />
<path d="M452.00 1495.00 L438.20 1508.80" fill="none" stroke="#777870" stroke-width="2.20" stroke-linecap="butt" stroke-linejoin="miter" />
<path d="M526.7 1486.2 L542.6 1515.4 H510.9 Z" fill="none" stroke="#777870" stroke-width="2.3" stroke-linejoin="round"/>
<path d="M526.70 1496.60 L526.70 1507.30" fill="none" stroke="#777870" stroke-width="2.90" stroke-linecap="butt" stroke-linejoin="miter" />
<path d="M526.70 1509.20 L526.70 1512.20" fill="none" stroke="#777870" stroke-width="2.90" stroke-linecap="butt" stroke-linejoin="miter" />
<path d="M640.71 1491.35 L642.40 1484.90 L647.60 1484.90 L649.29 1491.35 L655.04 1487.98 L658.72 1491.66 L655.35 1497.41 L661.80 1499.10 L661.80 1504.30 L655.35 1505.99 L658.72 1511.74 L655.04 1515.42 L649.29 1512.05 L647.60 1518.50 L642.40 1518.50 L640.71 1512.05 L634.96 1515.42 L631.28 1511.74 L634.65 1505.99 L628.20 1504.30 L628.20 1499.10 L634.65 1497.41 L631.28 1491.66 L634.96 1487.98Z" fill="none" stroke="#a6e22e" stroke-width="2.40" stroke-linejoin="miter"/>
<circle cx="645.00" cy="1501.70" r="4.00" fill="none" stroke="#a6e22e" stroke-width="2.40"/>
<path d="M833.20 1490.60 L861.00 1490.60" fill="none" stroke="#a6e22e" stroke-width="2.40" stroke-linecap="butt" stroke-linejoin="miter" />
<path d="M841.8 1490.6 V1487.2 a1.6 1.6 0 0 1 1.6 -1.6 h7.4 a1.6 1.6 0 0 1 1.6 1.6 V1490.6" fill="none" stroke="#a6e22e" stroke-width="2.3"/>
<path d="M836.8 1490.6 L837.9 1513.6 a2 2 0 0 0 2 1.9 h14.4 a2 2 0 0 0 2 -1.9 L857.4 1490.6" fill="none" stroke="#a6e22e" stroke-width="2.3"/>
<path d="M843.00 1494.80 L843.00 1511.60" fill="none" stroke="#a6e22e" stroke-width="2.20" stroke-linecap="butt" stroke-linejoin="miter" />
<path d="M847.20 1494.80 L847.20 1511.60" fill="none" stroke="#a6e22e" stroke-width="2.20" stroke-linecap="butt" stroke-linejoin="miter" />
<path d="M851.40 1494.80 L851.40 1511.60" fill="none" stroke="#a6e22e" stroke-width="2.20" stroke-linecap="butt" stroke-linejoin="miter" />
<ellipse cx="1036.9" cy="1490.7" rx="12.0" ry="5.6" fill="none" stroke="#a6e22e" stroke-width="2.4"/>
<path d="M1024.9 1490.7 V1512.3 a12 5.6 0 0 0 24 0 V1490.7" fill="none" stroke="#a6e22e" stroke-width="2.4"/>
<path d="M1201.8 1488.6 L1224.6 1503.1 L1201.8 1517.6 Z" fill="none" stroke="#a6e22e" stroke-width="2.4" stroke-linejoin="round"/>
<path d="M1365.8 1492.8 V1489.6 a7.2 7.2 0 0 1 14.4 0 V1492.8" fill="none" stroke="#a6e22e" stroke-width="2.3"/>
<path d="M1361.4 1492.9 H1384.6 C1386.6 1500 1386.4 1506 1383.5 1511 C1381 1515.6 1377.4 1518.7 1373 1518.7 C1368.6 1518.7 1365 1515.6 1362.5 1511 C1359.6 1506 1359.4 1500 1361.4 1492.9 Z" fill="none" stroke="#a6e22e" stroke-width="2.3"/>
<path d="M1366.50 1498.70 L1379.40 1510.50" fill="none" stroke="#a6e22e" stroke-width="2.30" stroke-linecap="butt" stroke-linejoin="miter" />
<path d="M1379.40 1498.70 L1366.50 1510.50" fill="none" stroke="#a6e22e" stroke-width="2.30" stroke-linecap="butt" stroke-linejoin="miter" />
<path d="M1356.50 1487.60 L1362.20 1492.70" fill="none" stroke="#a6e22e" stroke-width="2.30" stroke-linecap="butt" stroke-linejoin="miter" />
<path d="M1389.50 1487.60 L1384.00 1492.70" fill="none" stroke="#a6e22e" stroke-width="2.30" stroke-linecap="butt" stroke-linejoin="miter" />
<path d="M1352.90 1504.60 L1360.10 1504.60" fill="none" stroke="#a6e22e" stroke-width="2.30" stroke-linecap="butt" stroke-linejoin="miter" />
<path d="M1386.00 1504.60 L1393.10 1504.60" fill="none" stroke="#a6e22e" stroke-width="2.30" stroke-linecap="butt" stroke-linejoin="miter" />
<path d="M1357.40 1520.00 L1363.50 1513.90" fill="none" stroke="#a6e22e" stroke-width="2.30" stroke-linecap="butt" stroke-linejoin="miter" />
<path d="M1388.90 1520.10 L1382.80 1513.90" fill="none" stroke="#a6e22e" stroke-width="2.30" stroke-linecap="butt" stroke-linejoin="miter" />
<path d="M1569.00 1485.70 L1584.20 1485.70" fill="none" stroke="#a6e22e" stroke-width="2.60" stroke-linecap="butt" stroke-linejoin="miter" />
<path d="M1572.7 1485.7 V1497.1 L1562.9 1516.4 Q1562.1 1518.2 1564.2 1518.2 H1589 Q1591.1 1518.2 1590.3 1516.4 L1580.5 1497.1 V1485.7" fill="none" stroke="#a6e22e" stroke-width="2.5"/>
<path d="M1567.60 1508.10 L1585.60 1508.10" fill="none" stroke="#a6e22e" stroke-width="2.50" stroke-linecap="butt" stroke-linejoin="miter" />
<g transform="translate(1720.90 1481.70) scale(1.6670)" fill="#a6e22e"><path d="M10.94 13.5l-1.32 1.32a3.73 3.73 0 0 0-7.24 0L1.06 13.5 0 14.56l1.72 1.72-.22.22V18H0v1.5h1.5v.08c.077.489.214.966.41 1.42L0 22.94 1.06 24l1.65-1.65A4.308 4.308 0 0 0 6 24a4.31 4.31 0 0 0 3.29-1.65L10.94 24 12 22.94 10.09 21c.198-.464.336-.951.41-1.45v-.1H12V18h-1.5v-1.5l-.22-.22L12 14.56l-1.06-1.06zM6 13.5a2.25 2.25 0 0 1 2.25 2.25h-4.5A2.25 2.25 0 0 1 6 13.5zm3 6a3.33 3.33 0 0 1-3 3 3.33 3.33 0 0 1-3-3v-2.25h6v2.25zm14.76-9.9v1.26L13.5 17.37V15.6l8.5-5.37L9 2v9.46a5.07 5.07 0 0 0-1.5-.72V.63L8.64 0l15.12 9.6z"/></g></svg>
<div class="t" style="left:193.37px;top:135.88px;font-size:31.68px;letter-spacing:-1.117px;color:#5f6057;">EXPLORER</div>
<div class="t" style="left:193.95px;top:217.28px;font-size:31.68px;letter-spacing:0.652px;color:#727369;font-weight:bold;">CMAKE_SAMPLE</div>
<div class="t" style="left:295.90px;top:277.36px;font-size:38.30px;letter-spacing:0.585px;color:#9c9d95;">.vscode</div>
<div class="t" style="left:296.37px;top:340.72px;font-size:38.30px;letter-spacing:0.732px;color:#9c9d95;">libraries</div>
<div class="t" style="left:319.87px;top:404.08px;font-size:38.30px;letter-spacing:0.737px;color:#9c9d95;">adder</div>
<div class="t" style="left:342.77px;top:467.44px;font-size:38.30px;letter-spacing:0.811px;color:#9c9d95;">adder.c</div>
<div class="t" style="left:342.77px;top:530.80px;font-size:38.30px;letter-spacing:0.906px;color:#9c9d95;">adder.h</div>
<div class="t" style="left:342.52px;top:594.16px;font-size:38.30px;letter-spacing:0.496px;color:#9c9d95;">CMakeLists.txt</div>
<div class="t" style="left:319.87px;top:657.52px;font-size:38.30px;letter-spacing:1.093px;color:#e6db74;">divider</div>
<div class="t" style="left:342.52px;top:720.88px;font-size:38.30px;letter-spacing:0.496px;color:#9c9d95;">CMakeLists.txt</div>
<div class="t" style="left:342.77px;top:784.24px;font-size:38.30px;letter-spacing:0.909px;color:#9c9d95;">divider.c</div>
<div class="t" style="left:342.77px;top:847.60px;font-size:38.30px;letter-spacing:0.956px;color:#9c9d95;">divider.h</div>
<div class="t" style="left:319.90px;top:910.96px;font-size:38.30px;letter-spacing:1.037px;color:#9c9d95;">multiplier</div>
<div class="t" style="left:320.37px;top:974.32px;font-size:38.30px;letter-spacing:1.323px;color:#9c9d95;">subtractor</div>
<div class="t" style="left:295.90px;top:1037.68px;font-size:38.30px;letter-spacing:1.095px;color:#9c9d95;">.gitignore</div>
<div class="t" style="left:297.12px;top:1101.04px;font-size:38.30px;letter-spacing:0.465px;color:#9c9d95;">CMakeLists.txt</div>
<div class="t" style="left:295.87px;top:1164.40px;font-size:38.30px;letter-spacing:-1.580px;color:#9c9d95;">LICENSE</div>
<div class="t" style="left:296.50px;top:1227.76px;font-size:38.30px;letter-spacing:0.486px;color:#9c9d95;">main.c</div>
<div class="t" style="left:295.87px;top:1291.12px;font-size:38.30px;letter-spacing:-0.771px;color:#9c9d95;">README.md</div>
<div class="t" style="left:193.95px;top:1361.08px;font-size:31.68px;letter-spacing:0.848px;color:#727369;font-weight:bold;">OUTLINE</div>
<div class="t" style="left:194.82px;top:1423.58px;font-size:31.68px;letter-spacing:0.692px;color:#727369;font-weight:bold;">TIMELINE</div>
<div class="t" style="left:717.00px;top:132.48px;font-size:38.30px;letter-spacing:0.506px;color:#e6db74;">main.c</div>
<div class="t" style="left:735.00px;top:213.88px;font-size:38.30px;letter-spacing:0.306px;color:#9c9d95;">main.c</div>
<div class="t" style="left:895.03px;top:214.61px;font-size:37.44px;letter-spacing:-0.130px;color:#9c9d95;">...</div>
<div class="t" style="left:1049.00px;top:30.52px;font-size:35.30px;letter-spacing:0.470px;color:#9b9c94;">cmake_sample</div>
<div class="t" style="left:162.82px;top:1484.32px;font-size:35.30px;letter-spacing:0.683px;color:#777870;">main</div>
<div class="t" style="left:475.92px;top:1484.94px;font-size:34.56px;letter-spacing:0.000px;color:#777870;">0</div>
<div class="t" style="left:557.42px;top:1484.94px;font-size:34.56px;letter-spacing:0.000px;color:#777870;">0</div>
<div class="t" style="left:674.12px;top:1484.32px;font-size:35.30px;letter-spacing:1.252px;color:#a6e22e;-webkit-text-stroke:0.4px;">Debug</div>
<div class="t" style="left:877.85px;top:1484.32px;font-size:35.30px;letter-spacing:0.188px;color:#a6e22e;-webkit-text-stroke:0.4px;">Clean</div>
<div class="t" style="left:1066.12px;top:1484.32px;font-size:35.30px;letter-spacing:1.012px;color:#a6e22e;-webkit-text-stroke:0.4px;">Build</div>
<div class="t" style="left:1243.42px;top:1484.32px;font-size:35.30px;letter-spacing:-0.242px;color:#a6e22e;-webkit-text-stroke:0.4px;">Run</div>
<div class="t" style="left:1402.62px;top:1484.32px;font-size:35.30px;letter-spacing:1.102px;color:#a6e22e;-webkit-text-stroke:0.4px;">Debug</div>
<div class="t" style="left:1607.65px;top:1484.32px;font-size:35.30px;letter-spacing:0.562px;color:#a6e22e;-webkit-text-stroke:0.4px;">Test</div>
<div class="t" style="left:1770.52px;top:1484.32px;font-size:35.30px;letter-spacing:0.928px;color:#a6e22e;-webkit-text-stroke:0.4px;">Debug Test</div>
  </div>
  <div class="edge"></div>
</div>

</body></html>
